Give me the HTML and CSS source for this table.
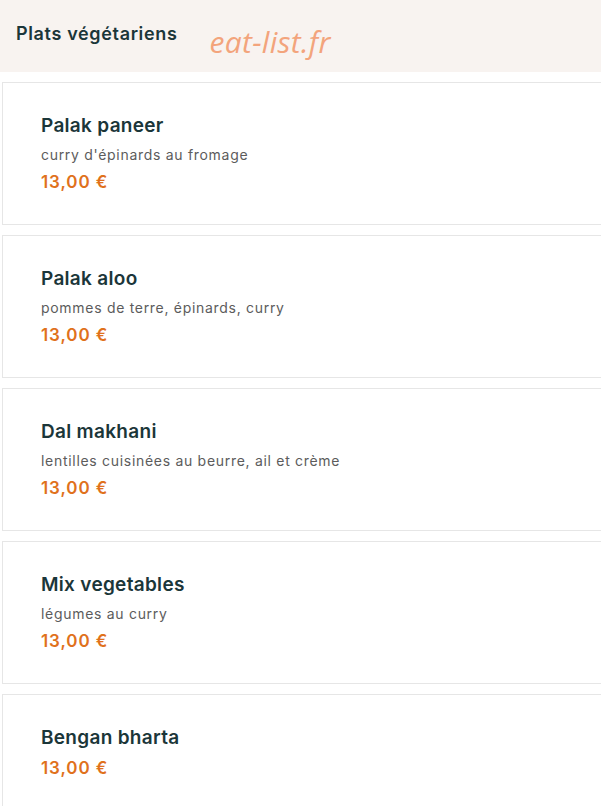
FILE: index.html
```html
<!DOCTYPE html>
<html lang="fr">
<head>
    <meta charset="UTF-8">
    <meta name="viewport" content="width=device-width, initial-scale=1.0">
    <title>Plats végétariens</title>
    <link rel="stylesheet" href="styles.css">
</head>
<body>
    <div class="category-header">
        <h2 class="category-title">Plats végétariens</h2>
        <span class="watermark">eat-list.fr</span>
    </div>

    <div class="dish-list">
        <div class="dish-card">
            <h3 class="dish-name">Palak paneer</h3>
            <p class="dish-desc">curry d'épinards au fromage</p>
            <div class="dish-price">13,00 €</div>
        </div>
        <div class="dish-card">
            <h3 class="dish-name">Palak aloo</h3>
            <p class="dish-desc">pommes de terre, épinards, curry</p>
            <div class="dish-price">13,00 €</div>
        </div>
        <div class="dish-card">
            <h3 class="dish-name">Dal makhani</h3>
            <p class="dish-desc">lentilles cuisinées au beurre, ail et crème</p>
            <div class="dish-price">13,00 €</div>
        </div>
        <div class="dish-card">
            <h3 class="dish-name">Mix vegetables</h3>
            <p class="dish-desc">légumes au curry</p>
            <div class="dish-price">13,00 €</div>
        </div>
        <div class="dish-card">
            <h3 class="dish-name">Bengan bharta</h3>
            <div class="dish-price">13,00 €</div>
        </div>
    </div>
</body>
</html>
```

FILE: styles.css
```css
body {
    margin: 0;
    background: #ffffff;
    font-family: Inter, "Noto Sans", sans-serif;
    overflow: hidden;
}
.category-header {
    display: flex;
    align-items: center;
    height: 72px;
    padding-left: 16px;
    background: #f8f3f0;
    box-sizing: border-box;
}
.category-title {
    margin: 0 0 6px 0;
    font-size: 18px;
    font-weight: 600;
    letter-spacing: 0.65px;
    color: #1b3639;
}
.watermark {
    margin-left: 32px;
    margin-top: 10px;
    font-family: "Open Sans", sans-serif;
    font-style: italic;
    font-size: 30px;
    letter-spacing: 0.3px;
    color: #f3a47c;
}
.dish-list {
    display: flex;
    flex-direction: column;
    gap: 10px;
    padding: 10px 0 0 2px;
    width: 640px;
}
.dish-card {
    height: 143px;
    box-sizing: border-box;
    border: 1px solid #e6e6e6;
    padding: 31px 0 0 38px;
}
.dish-name {
    margin: 0;
    font-size: 19px;
    font-weight: 600;
    letter-spacing: 0.3px;
    color: #1b3639;
    line-height: 24px;
}
.dish-desc {
    margin: 8px 0 0 0;
    font-size: 14px;
    letter-spacing: 0.7px;
    color: #5c5c5c;
    line-height: 18px;
}
.dish-price {
    margin-top: 7px;
    font-size: 17px;
    font-weight: 600;
    letter-spacing: 0.9px;
    color: #e0711c;
    line-height: 22px;
}
```
